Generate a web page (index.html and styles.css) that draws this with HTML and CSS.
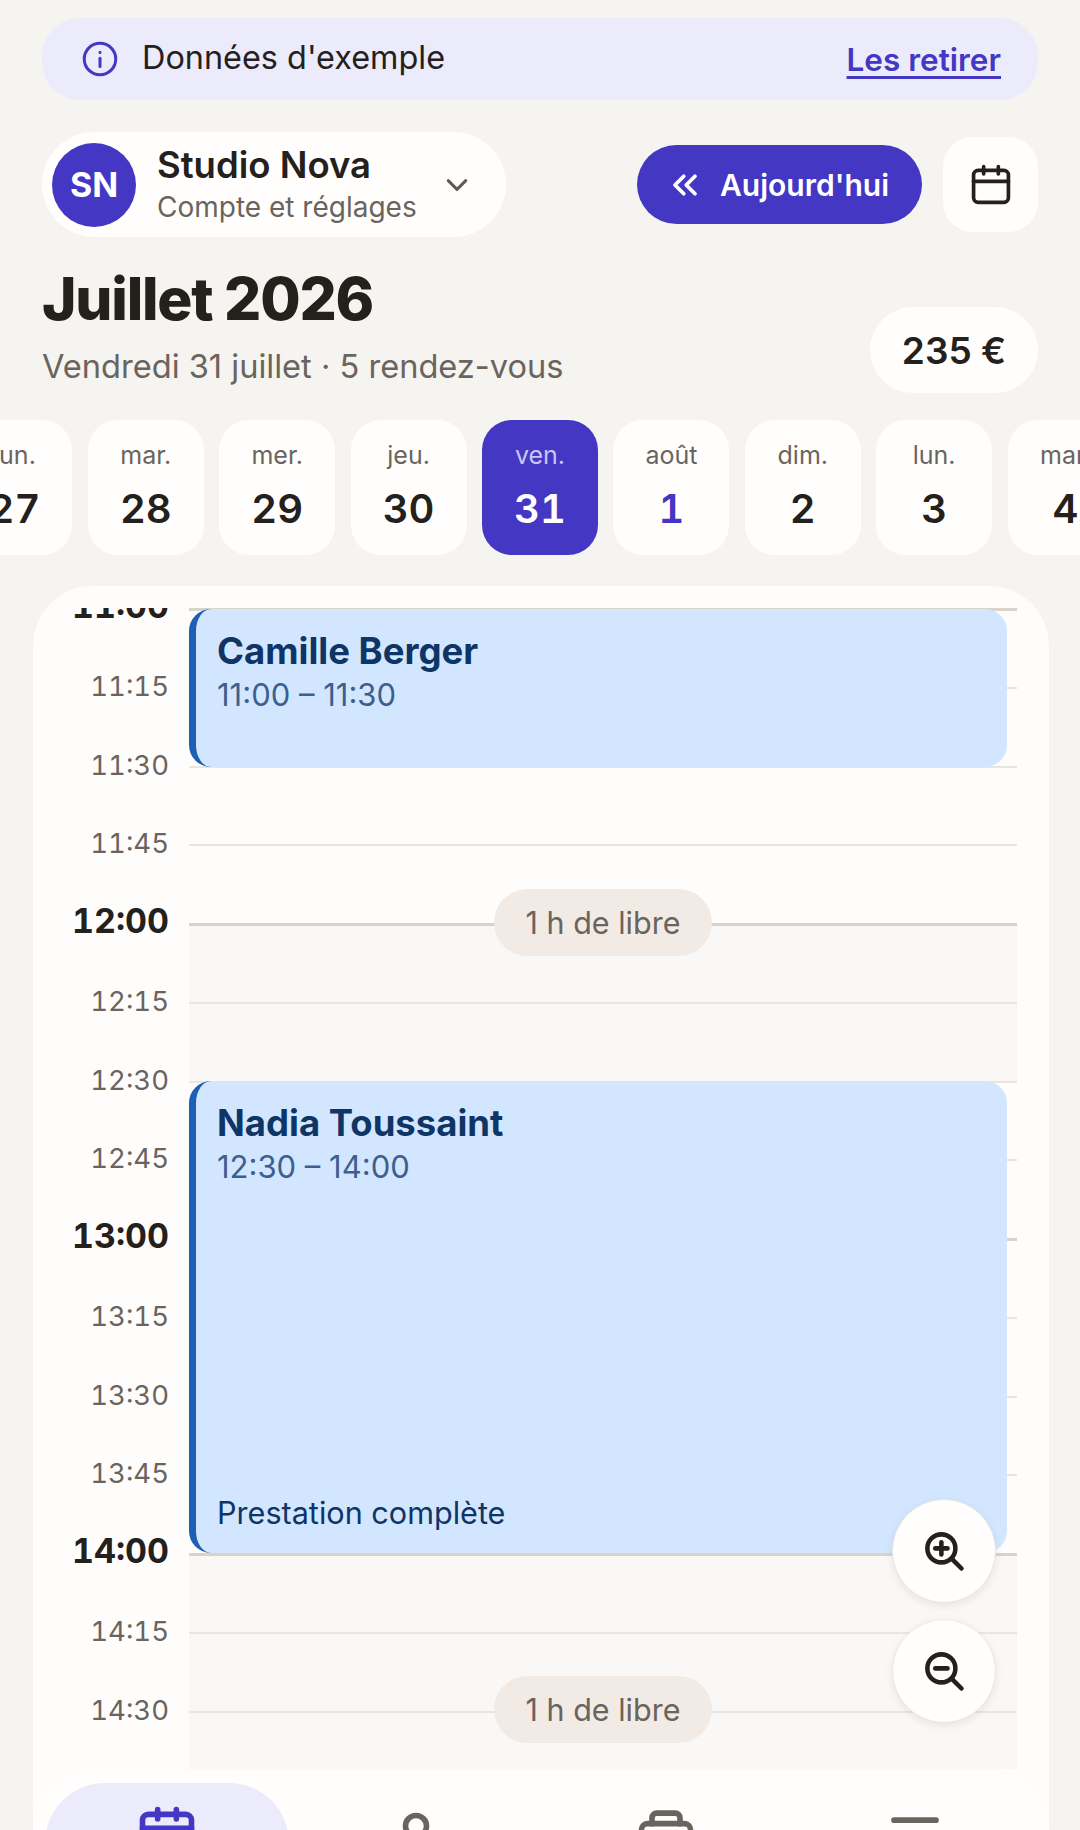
FILE: index.html
```html
<!DOCTYPE html>
<html lang="fr">
<head>
    <meta charset="UTF-8">
    <meta name="viewport" content="width=device-width, initial-scale=1.0">
    <title>Agenda</title>
    <link rel="stylesheet" href="styles.css">
</head>
<body>
    <div class="page">
        <div class="banner">
            <svg class="banner-icon" viewBox="0 0 24 24" fill="none" stroke="currentColor" stroke-width="2" stroke-linecap="round"><circle cx="12" cy="12" r="10.5"/><path d="M12 11.5v5.5"/><path d="M12 7.5v.1"/></svg>
            <span class="banner-text">Données d'exemple</span>
            <a class="banner-link" href="#">Les retirer</a>
        </div>

        <div class="toolbar">
            <div class="account">
                <div class="avatar">SN</div>
                <div class="account-info">
                    <div class="account-name">Studio Nova</div>
                    <div class="account-sub">Compte et réglages</div>
                </div>
                <svg class="account-chevron" viewBox="0 0 24 24" fill="none" stroke="currentColor" stroke-width="2.4" stroke-linecap="round" stroke-linejoin="round"><path d="M5 8.5l7 7 7-7"/></svg>
            </div>
            <button class="today-btn">
                <svg class="today-icon" viewBox="0 0 24 24" fill="none" stroke="currentColor" stroke-width="3" stroke-linecap="round" stroke-linejoin="round"><path d="M11 5l-7 7 7 7"/><path d="M20 5l-7 7 7 7"/></svg>
                Aujourd'hui
            </button>
            <button class="calendar-btn">
                <svg class="cal-icon" viewBox="0 0 24 24" fill="none" stroke="currentColor" stroke-width="2" stroke-linecap="round" stroke-linejoin="round"><rect x="2.5" y="4" width="19" height="17.5" rx="2.5"/><path d="M2.5 10h19"/><path d="M8 2v4"/><path d="M16 2v4"/></svg>
            </button>
        </div>

        <div class="heading">
            <div>
                <h1>Juillet 2026</h1>
                <p class="heading-sub">Vendredi 31 juillet · 5 rendez-vous</p>
            </div>
            <div class="total">235 €</div>
        </div>

        <div class="days">
            <div class="day"><span class="day-name">lun.</span><span class="day-num">27</span></div>
            <div class="day"><span class="day-name">mar.</span><span class="day-num">28</span></div>
            <div class="day"><span class="day-name">mer.</span><span class="day-num">29</span></div>
            <div class="day"><span class="day-name">jeu.</span><span class="day-num">30</span></div>
            <div class="day selected"><span class="day-name">ven.</span><span class="day-num">31</span></div>
            <div class="day month"><span class="day-name">août</span><span class="day-num">1</span></div>
            <div class="day"><span class="day-name">dim.</span><span class="day-num">2</span></div>
            <div class="day"><span class="day-name">lun.</span><span class="day-num">3</span></div>
            <div class="day"><span class="day-name">mar.</span><span class="day-num">4</span></div>
        </div>

        <div class="agenda">
            <div class="timeline">
                <div class="slot hour">
                    <div class="slot-time">11:00</div>
                    <div class="slot-line">
                        <div class="event event-short">
                            <div class="event-name">Camille Berger</div>
                            <div class="event-time">11:00 – 11:30</div>
                        </div>
                    </div>
                </div>
                <div class="slot"><div class="slot-time">11:15</div><div class="slot-line"></div></div>
                <div class="slot"><div class="slot-time">11:30</div><div class="slot-line"></div></div>
                <div class="slot"><div class="slot-time">11:45</div><div class="slot-line"></div></div>
                <div class="slot hour">
                    <div class="slot-time">12:00</div>
                    <div class="slot-line free"><span class="free-pill">1 h de libre</span></div>
                </div>
                <div class="slot"><div class="slot-time">12:15</div><div class="slot-line free"></div></div>
                <div class="slot">
                    <div class="slot-time">12:30</div>
                    <div class="slot-line">
                        <div class="event event-long">
                            <div class="event-name">Nadia Toussaint</div>
                            <div class="event-time">12:30 – 14:00</div>
                            <div class="event-note">Prestation complète</div>
                        </div>
                    </div>
                </div>
                <div class="slot"><div class="slot-time">12:45</div><div class="slot-line"></div></div>
                <div class="slot hour"><div class="slot-time">13:00</div><div class="slot-line"></div></div>
                <div class="slot"><div class="slot-time">13:15</div><div class="slot-line"></div></div>
                <div class="slot"><div class="slot-time">13:30</div><div class="slot-line"></div></div>
                <div class="slot"><div class="slot-time">13:45</div><div class="slot-line"></div></div>
                <div class="slot hour"><div class="slot-time">14:00</div><div class="slot-line free"></div></div>
                <div class="slot"><div class="slot-time">14:15</div><div class="slot-line free"></div></div>
                <div class="slot">
                    <div class="slot-time">14:30</div>
                    <div class="slot-line free"><span class="free-pill">1 h de libre</span></div>
                </div>
            </div>

            <div class="zoom-btns">
                <button class="zoom-btn">
                    <svg viewBox="0 0 24 24" fill="none" stroke="currentColor" stroke-width="2.6" stroke-linecap="round"><circle cx="10.5" cy="10.5" r="8"/><path d="M16.5 16.5l5.5 5.5"/><path d="M10.5 7v7"/><path d="M7 10.5h7"/></svg>
                </button>
                <button class="zoom-btn">
                    <svg viewBox="0 0 24 24" fill="none" stroke="currentColor" stroke-width="2.6" stroke-linecap="round"><circle cx="10.5" cy="10.5" r="8"/><path d="M16.5 16.5l5.5 5.5"/><path d="M7 10.5h7"/></svg>
                </button>
            </div>

            <nav class="tabbar">
                <div class="tab active">
                    <svg viewBox="0 0 24 24" fill="none" stroke="currentColor" stroke-width="2.4" stroke-linecap="round" stroke-linejoin="round"><rect x="1.500" y="4" width="21" height="17.5" rx="2.5"/><path d="M1.500 10h21"/><path d="M8 2v4"/><path d="M16 2v4"/></svg>
                </div>
                <div class="tab">
                    <svg viewBox="0 0 24 24" fill="none" stroke="currentColor" stroke-width="2.4" stroke-linecap="round" stroke-linejoin="round"><circle cx="12" cy="9" r="4.500"/><path d="M3.500 24c0-5 4-8 8.500-8s8.500 3 8.500 8"/></svg>
                </div>
                <div class="tab">
                    <svg viewBox="0 0 24 24" fill="none" stroke="currentColor" stroke-width="2.4" stroke-linecap="round" stroke-linejoin="round"><rect x="1.500" y="8" width="21" height="15" rx="2.500"/><path d="M6 8V5.500A2 2 0 0 1 8 3.500h8a2 2 0 0 1 2 2V8"/></svg>
                </div>
                <div class="tab">
                    <svg viewBox="0 0 24 24" fill="none" stroke="currentColor" stroke-width="2.4" stroke-linecap="round"><path d="M3 6.500h18"/><path d="M3 14.500h18"/><path d="M3 22.500h18"/></svg>
                </div>
            </nav>
        </div>
    </div>
</body>
</html>
```

FILE: styles.css
```css
* {
    box-sizing: border-box;
}
body {
    font-family: Inter, "Liberation Sans", sans-serif;
    margin: 0;
    background-color: #f6f4f0;
    color: #24201c;
}
button {
    font-family: inherit;
    border: none;
}
.page {
    height: 1830px;
    padding-top: 18px;
    display: flex;
    flex-direction: column;
    overflow: hidden;
}

/* banner */
.banner {
    height: 82px;
    margin: 0 42px;
    padding: 0 37px 0 40px;
    display: flex;
    align-items: center;
    background-color: #ebebfb;
    border-radius: 38px;
}
.banner-icon {
    width: 36px;
    height: 36px;
    color: #4337c4;
}
.banner-text {
    margin: 0 0 4px 24px;
    font-size: 32.4px;
    flex: 1;
}
.banner-link {
    font-size: 31.5px;
    font-weight: 600;
    color: #4337c4;
    text-decoration: underline;
    text-decoration-thickness: 3px;
    text-underline-offset: 5px;
}

/* toolbar */
.toolbar {
    margin: 32px 42px 0;
    display: flex;
    align-items: center;
}
.account {
    width: 464px;
    height: 105px;
    padding: 0 34px 0 10px;
    display: flex;
    align-items: center;
    background-color: #fffefc;
    border-radius: 53px;
}
.avatar {
    width: 84px;
    height: 84px;
    display: flex;
    align-items: center;
    justify-content: center;
    background-color: #4337c4;
    color: white;
    border-radius: 50%;
    font-size: 34px;
    font-weight: 700;
}
.account-info {
    margin-left: 21px;
    flex: 1;
}
.account-name {
    font-size: 36.5px;
    font-weight: 600;
    line-height: 42px;
}
.account-sub {
    margin-top: 2px;
    font-size: 28px;
    line-height: 38px;
    color: #6a645e;
}
.account-chevron {
    width: 30px;
    height: 30px;
    color: #5f5a55;
}
.today-btn {
    height: 79px;
    width: 285px;
    margin-left: auto;
    display: flex;
    align-items: center;
    justify-content: center;
    gap: 20px;
    background-color: #4337c4;
    color: white;
    border-radius: 40px;
    font-size: 30px;
    font-weight: 600;
}
.today-icon {
    width: 30px;
    height: 30px;
}
.calendar-btn {
    width: 95px;
    height: 95px;
    margin-left: 21px;
    display: flex;
    align-items: center;
    justify-content: center;
    padding: 0;
    background-color: #fffefc;
    color: #24201c;
    border-radius: 30px;
}
.cal-icon {
    width: 44px;
    height: 44px;
}

/* heading */
.heading {
    margin: 27px 42px 0;
    display: flex;
    justify-content: space-between;
    align-items: flex-end;
}
h1 {
    margin: 0;
    font-size: 58.5px;
    font-weight: 800;
    line-height: 70px;
    letter-spacing: -1.2px;
}
.heading-sub {
    margin: 10px 0 0;
    font-size: 32.6px;
    line-height: 44px;
    color: #6a645e;
}
.total {
    width: 168px;
    height: 86px;
    margin-bottom: -5px;
    display: flex;
    align-items: center;
    justify-content: center;
    background-color: #fffefc;
    border-radius: 43px;
    font-size: 37px;
    font-weight: 600;
}

/* day strip */
.days {
    margin-top: 32px;
    display: flex;
    justify-content: center;
    gap: 15.4px;
}
.day {
    flex: 0 0 116px;
    height: 135px;
    padding-top: 18px;
    display: flex;
    flex-direction: column;
    align-items: center;
    background-color: #fffefc;
    border-radius: 30px;
}
.day-name {
    font-size: 25px;
    line-height: 34px;
    color: #6a645e;
}
.day-num {
    margin-top: 13px;
    font-size: 40px;
    font-weight: 600;
    line-height: 48px;
    font-feature-settings: "tnum";
}
.day.selected {
    background-color: #4337c4;
}
.day.selected .day-name {
    color: #c9c6f4;
}
.day.selected .day-num {
    color: white;
}
.day.month .day-num {
    color: #4337c4;
}

/* agenda */
.agenda {
    position: relative;
    flex: 1;
    min-height: 0;
    margin: 31px 31px 0 33px;
    padding-top: 22px;
    display: flex;
    flex-direction: column;
    background-color: #fffdfb;
    border-radius: 60px 60px 0 0;
}
.timeline {
    flex: 1;
    min-height: 0;
    overflow: hidden;
}
.slot {
    height: 78.75px;
    display: flex;
}
.slot-time {
    width: 156px;
    padding-right: 20px;
    text-align: right;
    font-size: 27.5px;
    line-height: 40px;
    margin-top: -21px;
    color: #6a645e;
    font-feature-settings: "tnum";
}
.slot.hour .slot-time {
    margin-top: -22px;
    font-size: 34px;
    font-weight: 700;
    color: #24201c;
}
.slot-line {
    position: relative;
    flex: 0 0 828px;
    border-top: 2px solid #e9e5df;
}
.slot.hour .slot-line {
    border-top: 3px solid #d8d3cb;
}
.slot-line.free {
    background-color: #faf8f6;
}
.free-pill {
    position: absolute;
    z-index: 1;
    top: -37px;
    left: 305px;
    width: 218px;
    height: 67px;
    display: flex;
    align-items: center;
    justify-content: center;
    background-color: #f2ebe5;
    color: #6a645e;
    border-radius: 34px;
    font-size: 30.5px;
}
.event {
    position: absolute;
    z-index: 1;
    top: -2px;
    left: 0;
    right: 10px;
    padding: 21px 20px 0 21px;
    background-color: #d2e7ff;
    border-left: 7px solid #1d5fb4;
    border-radius: 22px;
    color: #0f3566;
}
.event-short {
    height: 158px;
}
.event-long {
    height: 472px;
}
.event-name {
    font-size: 36.5px;
    font-weight: 700;
    line-height: 42px;
}
.event-time {
    margin-top: 2px;
    font-size: 31px;
    line-height: 42px;
    color: #3c5f8e;
}
.event-note {
    position: absolute;
    left: 21px;
    bottom: 20px;
    font-size: 30.6px;
    line-height: 40px;
}

/* zoom buttons */
.zoom-btns {
    position: absolute;
    z-index: 2;
    right: 53px;
    bottom: 107px;
    display: flex;
    flex-direction: column;
    gap: 16px;
}
.zoom-btn {
    width: 104px;
    height: 104px;
    display: flex;
    align-items: center;
    justify-content: center;
    padding: 0;
    background-color: #fffefc;
    color: #24201c;
    border: 1px solid #ece8e2;
    border-radius: 50%;
    box-shadow: 0 3px 8px rgba(0,0,0,0.08);
}
.zoom-btn svg {
    width: 42px;
    height: 42px;
}

/* tab bar */
.tabbar {
    position: relative;
    z-index: 3;
    flex: 0 0 58px;
    margin-top: 3px;
    padding: 11px 9px 0;
    display: grid;
    grid-template-columns: repeat(4, 1fr);
    background-color: #fffefc;
    border-radius: 64px 64px 0 0;
    overflow: hidden;
}
.tab {
    height: 120px;
    margin: 0 3px;
    padding-top: 22px;
    display: flex;
    justify-content: center;
    color: #6a645e;
    border-radius: 70px;
}
.tab svg {
    width: 56px;
    height: 56px;
}
.tab.active {
    background-color: #ecebfb;
    color: #4337c4;
}
```
